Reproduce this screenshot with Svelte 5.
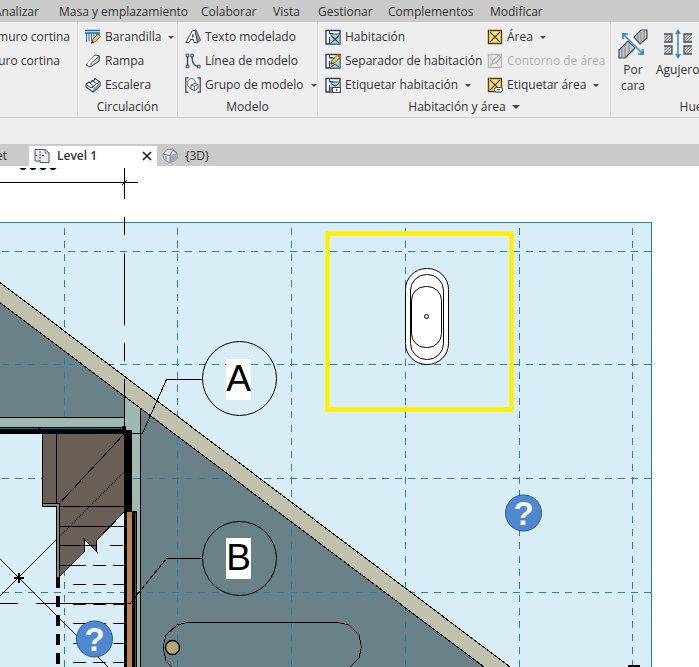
<script lang="ts">
	type Shape = { d: string; fill?: string; stroke?: string; w?: number };
	type Tool = { label: string; icon?: string; arrow?: boolean; disabled?: boolean };
	type Panel = { title: string; name: string; tools: Tool[] };

	const menus = [
		'Analizar',
		'Masa y emplazamiento',
		'Colaborar',
		'Vista',
		'Gestionar',
		'Complementos',
		'Modificar'
	];

	const panels: Panel[] = [
		{ title: '', name: 'curtain', tools: [{ label: 'muro cortina' }, { label: 'muro cortina' }] },
		{
			title: 'Circulación',
			name: 'circulation',
			tools: [
				{ label: 'Barandilla', icon: 'railing', arrow: true },
				{ label: 'Rampa', icon: 'ramp' },
				{ label: 'Escalera', icon: 'stair' }
			]
		},
		{
			title: 'Modelo',
			name: 'model',
			tools: [
				{ label: 'Texto modelado', icon: 'text' },
				{ label: 'Línea de modelo', icon: 'line' },
				{ label: 'Grupo de modelo', icon: 'group', arrow: true }
			]
		},
		{
			title: 'Habitación y área',
			name: 'rooms',
			tools: [
				{ label: 'Habitación', icon: 'room' },
				{ label: 'Separador de habitación', icon: 'separator' },
				{ label: 'Etiquetar habitación', icon: 'roomTag', arrow: true },
				{ label: 'Área', icon: 'area', arrow: true },
				{ label: 'Contorno de área', icon: 'boundary', disabled: true },
				{ label: 'Etiquetar área', icon: 'areaTag', arrow: true }
			]
		}
	];

	const ink = '#34404d';
	const pencil: Shape[] = [
		{ d: 'M6 11 7 7.5 13 1.5 15.5 4 9.5 10Z', fill: '#f5c451', stroke: '#6b4a1c', w: 0.8 },
		{ d: 'M12 2.5 13.2 1.2 15.7 3.7 14.5 5Z', fill: '#d9622b' },
		{ d: 'M5.5 11.5 6.5 8.7 8.3 10.5Z', fill: '#3b3027' }
	];
	const roomBase: Shape[] = [
		{ d: 'M1 1.5H15V15H1Z', fill: '#f5f8fa', stroke: ink, w: 1.4 },
		{ d: 'M5.5 5.5H14.5V14.5H5.5Z', fill: '#a9d3e6' },
		{ d: 'M4.5 1V4.5H8M4.5 8V15M4.5 5H15', stroke: ink, w: 1.2 }
	];
	const areaBase: Shape[] = [
		{ d: 'M1.5 1.5H14.5V14.5H1.5Z', fill: '#ffe07a', stroke: '#4a4325', w: 1.4 },
		{ d: 'M3 3 13 13M13 3 3 13', stroke: '#4a4325', w: 1.2 }
	];

	const icons: Record<string, Shape[]> = {
		railing: [
			{ d: 'M0 1.5H15M0 4H15', stroke: '#1d67ae', w: 1.4 },
			{ d: 'M1.5 4V13M4 4V12M6.5 4V12M9 4V11M11.5 4V8M14 4V6', stroke: '#2e78bd', w: 1.1 },
			{ d: 'M6.5 14 8 10 13 5 15.5 7.5 10.5 12.5Z', fill: '#f5bd45', stroke: '#694b20', w: 0.9 },
			{ d: 'M6 14.5 7.2 11.7 9 13.5Z', fill: '#3b3027' }
		],
		ramp: [
			{ d: 'M1 12 10 2 14.5 3 14 8 5 14Z', fill: '#fff', stroke: ink, w: 1 },
			{ d: 'M6 13.5V10L14.5 3 14 8Z', fill: '#c9cdd1', stroke: ink, w: 0.8 },
			{ d: 'M1 12 6 10 10 2Z', fill: '#fff' }
		],
		stair: [
			{ d: 'M1 7 4 5 5.5 6 7 3.5 8.5 4.5 10 1.5 15 5V9L8 15 1 10Z', fill: '#f8f9fa', stroke: ink, w: 1.1 },
			{ d: 'M1.5 7.5 6 11 8.5 9 4.5 5.5M7 11 9 9 11.5 6.5 7 3.5M12 7 14.5 5', stroke: ink, w: 1 },
			{ d: 'M8 12 14.5 6V9L8 14.5Z', fill: '#8f98a0' }
		],
		text: [
			{ d: 'M8 1.5 11 1 15.5 11 12.5 14 10 13.5Z', fill: '#8d9aa5', stroke: ink, w: 0.8 },
			{
				d: 'M.8 13.5 7.5 1.5H10L12.5 13.5H9L8.5 10.5H5.5L4 13.5ZM7 8H8.2L7.9 5.5Z',
				fill: '#fff',
				stroke: ink,
				w: 1
			}
		],
		line: [
			{ d: 'M2.5 3V13M7 3C7 9 9 13 13 13.5', stroke: ink, w: 1.3 },
			{
				d: 'M1.2 1.2H3.8V3.8H1.2ZM1.2 12.2H3.8V14.8H1.2ZM5.8 1.2H8.2V3.8H5.8ZM12.5 12.2H15V14.8H12.5Z',
				fill: '#fff',
				stroke: ink,
				w: 1
			}
		],
		group: [
			{ d: 'M3.5 .8H.8V15.2H3.5M12.5 .8H15.2V15.2H12.5', stroke: ink, w: 1.2 },
			{ d: 'M3 6.5A3.7 3.7 0 1 1 10 6.5 3.7 3.7 0 1 1 3 6.5', fill: '#fff', stroke: '#536170', w: 1 },
			{ d: 'M6 8 10 6.5 13 7.5V11.5L9.5 13.5 6 12Z', fill: '#edf1f4', stroke: '#536170', w: 1 },
			{ d: 'M6 8 9.5 9.2 13 7.5M9.5 9.2V13.5', stroke: '#536170', w: 0.8 }
		],
		room: [...roomBase, { d: 'M6 6.5 14 14M14 6.5 6 14', stroke: ink, w: 1.1 }],
		separator: [...roomBase, { d: 'M6 14 10 11 14 14', stroke: ink, w: 1 }, ...pencil],
		roomTag: [
			...roomBase,
			{ d: 'M6 6.5 10 9 14 6.5M6 14V10', stroke: ink, w: 1 },
			{ d: 'M7.5 10.5H15.5V15.5H7.5Z', fill: '#fff', stroke: ink, w: 1 },
			{ d: 'M11.5 12V14', stroke: ink, w: 1 }
		],
		area: areaBase,
		boundary: [
			{ d: 'M1.5 1.5H14.5V14.5H1.5Z', fill: '#ededed', stroke: '#b8b8b8', w: 1.3 },
			{ d: 'M2 5H7M3 13 7 9M9 10 13 14M4 2V14', stroke: '#c2c2c2', w: 1 },
			{ d: 'M5 11 6 7.5 11.5 2 14 4.5 8.5 10Z', fill: '#e6e6e6', stroke: '#adadad', w: 1.1 }
		],
		areaTag: [
			...areaBase,
			{
				d: 'M9.5 10.5H13.5A2.2 2.2 0 0 1 13.5 15H9.5A2.2 2.2 0 0 1 9.5 10.5Z',
				fill: '#fff',
				stroke: ink,
				w: 1
			},
			{ d: 'M10 12.7H13', stroke: ink, w: 1 }
		]
	};

	// structural grid of the floor plan
	const gridX = [64.5, 177.5, 291.5, 405.5, 519.5, 632.5];
	const gridY = [251.5, 364.5, 478.5, 592.5];
	const hiddenTreads = [565.5, 584.5, 604.5, 623.5, 643.5, 662.5];
	const bubbles = [
		{ name: 'A', y: 378.5, boxY: 359, leader: 'M131 433.5H142.5L166.5 379.5H202' },
		{ name: 'B', y: 558.5, boxY: 538, leader: 'M0 603.5H18M36 603.5H130L166.5 558.5H202' }
	];
	const helpMarks = [
		{ x: 523.5, y: 513 },
		{ x: 94.5, y: 639 }
	];
</script>

{#snippet icon(name: string)}
	<svg class="icon" viewBox="0 0 16 16" aria-hidden="true">
		{#each icons[name] as s}
			<path d={s.d} fill={s.fill ?? 'none'} stroke={s.stroke ?? 'none'} stroke-width={s.w ?? 0} />
		{/each}
	</svg>
{/snippet}

<div class="app">
	<nav class="menu-bar">
		{#each menus as menu}
			<button type="button">{menu}</button>
		{/each}
	</nav>

	<div class="ribbon">
		{#each panels as panel}
			<section class="panel {panel.name}">
				<div class="tools">
					{#each panel.tools as tool}
						<button type="button" class="tool" disabled={tool.disabled}>
							{#if tool.icon}{@render icon(tool.icon)}{/if}
							<span>{tool.label}</span>
							{#if tool.arrow}<i class="arrow"></i>{/if}
						</button>
					{/each}
				</div>
				{#if panel.title}
					<div class="panel-title">
						{panel.title}
						{#if panel.name === 'rooms'}<i class="arrow large"></i>{/if}
					</div>
				{/if}
			</section>
		{/each}

		<section class="panel openings">
			<div class="big-tools">
				<button type="button" class="big-tool">
					<svg viewBox="0 0 30 30" aria-hidden="true">
						<path d="M1 21 9 13 17 21 9 29H1Z" fill="#bfc3c7" />
						<path d="M11 12 19 4 27 11 18 20Z" fill="#fff" />
						<path d="M17 8 24 1H29V10L22 15Z" fill="#bfc3c7" />
						<path d="M1 29V21L10 12 17 19 7 29ZM16 8 23 1H29V9L22 15Z" fill="none" stroke="#454b51" stroke-width="1.2" />
						<path d="M4 19V28M7 16V28M11 14V24M20 5V12M23 3V14M26 2V11" stroke="#858a90" />
						<path d="M6 6 24 24M5 10V5H10M25 20V25H20" fill="none" stroke="#388de0" stroke-width="1.7" />
						<path d="M4 4H9L4 9ZM26 26H21L26 21Z" fill="#388de0" />
					</svg>
					<span>Por<br />cara</span>
				</button>
				<button type="button" class="big-tool">
					<svg viewBox="0 0 30 30" aria-hidden="true">
						<path d="M9 5H21V13H9ZM9 17H21V25H9Z" fill="#fff" />
						<path d="M1 5H9V13H1ZM21 5H29V13H21ZM1 17H9V25H1ZM21 17H29V25H21Z" fill="#c1c4c7" />
						<path d="M2 12 8 6M2 9 5 6M5 12 9 8M22 12 28 6M22 9 25 6M25 12 29 8M2 24 8 18M2 21 5 18M5 24 9 20M22 24 28 18M22 21 25 18M25 24 29 20" stroke="#888c90" />
						<path d="M1 5H9V13H1M29 5H21V13H29M1 17H9V25H1M29 17H21V25H29" fill="none" stroke="#4a4e52" stroke-width="1.3" />
						<path d="M15 3V27" stroke="#388de0" stroke-width="1.6" />
						<path d="M15 0 18 5H12ZM15 30 12 25H18Z" fill="#388de0" />
					</svg>
					<span>Agujero</span>
				</button>
			</div>
			<div class="panel-title">Hueco</div>
		</section>
	</div>

	<div class="options-bar"></div>

	<div class="view-tabs">
		<button type="button" class="view-tab previous">et</button>
		<div class="view-tab active">
			<svg class="icon" viewBox="0 0 16 16" aria-hidden="true">
				<path d="M1 1.5H11L15 5V14.5H6V13H1Z" fill="#e8ebee" stroke="#4c5966" />
				<path d="M6 3V13M1 7.5H4M8 7.5H11M11 1.5V5H15" fill="none" stroke="#4c5966" stroke-dasharray="2 1" />
			</svg>
			<span>Level 1</span>
			<button type="button" class="close" aria-label="Cerrar">
				<svg viewBox="0 0 10 10"><path d="M1 1 9 9M9 1 1 9" stroke="#222" stroke-width="1.7" /></svg>
			</button>
		</div>
		<button type="button" class="view-tab">
			<svg class="icon" viewBox="0 0 16 16" aria-hidden="true">
				<path d="M1 6 5 1.5 11 1 15 5V11L8 15 2 11.5Z" fill="#dfe2e5" stroke="#858d95" />
				<path d="M8 7 15 5V11L8 15Z" fill="#a2abb4" />
				<path d="M1 6 8 7.5 11 2 15 5.5M8 7.5V15M4 8V12" fill="none" stroke="#77818b" />
			</svg>
			<span>{'{3D}'}</span>
		</button>
	</div>

	<svg class="plan" viewBox="0 166 699 501" role="img" aria-label="Level 1">
		<!-- dimension string above the plan -->
		<text class="dimension" x="18" y="170">0000</text>
		<path d="M0 166H140V168H0Z" fill="#fff" />
		<g class="crisp">
			<path class="thin" d="M0 182.5H138M122 185 127 180" />

			<path d="M0 222H652V667H0Z" fill="#d8edf5" />
			<path d="M0 222.5H651.5V667" fill="none" stroke="#1888b2" />

			<!-- terrain and roof edge -->
			<path d="M0 302.5 124.5 396V418H0ZM141 409 484 667H141Z" fill="#6b8188" />
			<path d="M124 396 141 409V667H132V434H124Z" fill="#a0b9b0" />
			<g class="grid">
				{#each gridX as x}
					<path d="M{x} 228V667" />
				{/each}
				{#each gridY as y}
					<path d="M2 {y}H651" />
				{/each}
			</g>
			<path d="M0 282.5 510 667H484L0 302.5Z" fill="#c0c2ae" />
			<path class="thin" d="M0 282.5 510 667M0 302.5 484 667M140.5 409V667" />

			<!-- top wall -->
			<path d="M0 418H124V427H0Z" fill="#a0b9b0" />
			<path class="thin" d="M0 417.5H124" />
			<path d="M0 427H122V426H126V434H0Z" fill="#000" />
			<path d="M0 428.5H38M41 428.5H122" stroke="#176f9b" />

			<!-- stair flight -->
			<path d="M42 434H124V512L96 541 97 552 84 539 85 551 59 577V504H42Z" fill="#695f57" />
			<path class="thin" d="M42.5 434V504M56.5 434V504M124 434 59 504M124 472 0 596M0 559 108 667" />
			<path class="thin" d="M60 506.5H124M60 526.5H124M60 545.5H97M60 565.5H73" />
			<path class="thin" d="M124 512 96 541 97 552 84 539 85 551 59 577" />
			<path d="M42.5 503.5H59.5V577L56.5 580V506.5H42.5Z" fill="#8a8781" stroke="#000" />
			<path class="treads" d="M110 545.5H124" />
			{#each hiddenTreads as y}
				<path class="treads" d="M73 {y}H124" />
			{/each}
			<path d="M58 577V667" stroke="#000" stroke-width="4" stroke-dasharray="11 8" />
			<path d="M14 577.5H24M19 573V583" stroke="#000" stroke-width="2" />

			<!-- right wall and door leaf -->
			<path d="M124 430H132V511H137V667H124Z" fill="#000" />
			<path d="M127 512H132V667H127Z" fill="#b98150" />
			<path d="M135 513V667" stroke="#6b4a32" />

			<path class="thin" d="M124.5 168V199M124.5 217V235M124.5 253V325M124.5 343V361M124.5 379V434" />

			<!-- bath inside the roof -->
			<path class="thin" d="M172 667 166 661 163 647 166 635 177 625 187 622.5H338L349 625 359 635 361.5 647 359 658 350 667" />
			<path d="M628 665H640V667H628Z" fill="#000" />
		</g>
		<circle cx="172.5" cy="647.5" r="7" fill="#b6a678" stroke="#000" stroke-width="1.4" />

		{#each bubbles as b}
			<path class="thin crisp" d={b.leader} />
			<circle class="thin" cx="239.5" cy={b.y} r="37" />
			<rect x="226" y={b.boxY} width="25" height="41" fill="#fff" />
			<text class="bubble-name" x="238.5" y={b.boxY + 32}>{b.name}</text>
		{/each}

		<!-- freestanding bath with selection frame -->
		<g class="bath">
			<rect x="405.5" y="268.5" width="43" height="96" rx="21" />
			<rect x="410.5" y="274.5" width="33" height="85" rx="16" />
			<rect x="411.5" y="286.5" width="30" height="61" rx="14" />
			<circle cx="426.5" cy="316.5" r="2" />
		</g>
		<rect x="327.5" y="233.5" width="184" height="176" fill="none" stroke="#ffef00" stroke-width="4.5" />

		{#each helpMarks as mark}
			<circle cx={mark.x} cy={mark.y} r="18" fill="#4f88cf" stroke="#2c5994" />
			<text class="help-mark" x={mark.x} y={mark.y + 12}>?</text>
		{/each}
	</svg>
</div>

<style>
	:global(body) {
		margin: 0;
		background: #fff;
	}

	.app {
		overflow: hidden;
		font-family: 'Open Sans', 'Noto Sans', sans-serif;
		font-size: 12px;
		line-height: 16px;
		color: #333;
	}

	button {
		padding: 0;
		border: 0;
		background: none;
		color: inherit;
		font: inherit;
		text-align: left;
		white-space: nowrap;
	}

	/* Menu */
	.menu-bar {
		display: grid;
		grid-template-columns: 65px 142px 72px 45px 70px 102px auto;
		box-sizing: border-box;
		height: 22px;
		margin-left: -6px;
		padding-top: 2px;
		background: #cacaca;
	}

	/* Ribbon */
	.ribbon {
		display: flex;
		height: 95px;
		border-bottom: 1px solid #cdcdcd;
		background: #eee;
	}

	.panel {
		display: flex;
		flex: none;
		flex-direction: column;
		box-sizing: border-box;
		padding: 3px 0 0 7px;
		border-right: 1px solid #d6d6d6;
	}

	.curtain {
		width: 78px;
	}

	.curtain .tool {
		justify-content: flex-end;
		padding-right: 7px;
	}

	.curtain .tool + .tool {
		padding-right: 17px;
	}

	.circulation {
		width: 100px;
	}

	.model {
		width: 140px;
	}

	.rooms {
		width: 293px;
	}

	.openings {
		width: 174px;
	}

	.tools {
		display: grid;
		grid-template-rows: repeat(3, 24px);
		grid-auto-flow: column;
		grid-auto-columns: auto;
	}

	.rooms .tools {
		grid-template-columns: 162px auto;
	}

	.tool {
		display: flex;
		align-items: center;
		gap: 4px;
		min-width: 0;
	}

	.tool:disabled {
		color: #b1b1b1;
	}

	.icon {
		flex: none;
		width: 16px;
		height: 16px;
	}

	.arrow {
		flex: none;
		margin-left: 3px;
		border: 3px solid transparent;
		border-top-color: #444;
		border-bottom: 0;
	}

	.arrow.large {
		border-width: 4px;
		border-bottom: 0;
	}

	.panel-title {
		display: flex;
		align-items: center;
		justify-content: center;
		gap: 3px;
		margin-left: -7px;
		padding-top: 2px;
	}

	.big-tools {
		display: flex;
		gap: 8px;
		height: 72px;
	}

	.big-tool {
		display: flex;
		flex-direction: column;
		align-items: center;
		gap: 3px;
		padding-top: 4px;
		text-align: center;
	}

	.big-tool svg {
		width: 30px;
		height: 30px;
	}

	.options-bar {
		height: 26px;
		background: #eee;
	}

	/* View tabs */
	.view-tabs {
		display: flex;
		align-items: flex-end;
		height: 22px;
		background: #cacaca;
	}

	.view-tab {
		display: flex;
		align-items: center;
		box-sizing: border-box;
		gap: 7px;
		height: 20px;
		padding-left: 5px;
	}

	.view-tab.previous {
		justify-content: flex-end;
		width: 29px;
		padding-right: 22px;
	}

	.view-tab.active {
		width: 128px;
		padding-right: 5px;
		background: #fff;
		font-weight: 600;
	}

	.close {
		width: 10px;
		height: 10px;
		margin-left: auto;
	}

	.close svg {
		display: block;
	}

	/* Plan */
	.plan {
		display: block;
		width: 100%;
	}

	.crisp {
		shape-rendering: crispEdges;
	}

	.thin {
		fill: none;
		stroke: #000;
		stroke-width: 1;
	}

	.grid path {
		stroke: #1888b2;
		stroke-dasharray: 7 6.1;
	}

	.treads {
		stroke: #000;
		stroke-width: 1.5;
		stroke-dasharray: 13 7;
	}

	.bath * {
		fill: #fff;
		stroke: #000;
		stroke-width: 1;
	}

	.dimension {
		font: bold 18px 'Liberation Sans', sans-serif;
	}

	.bubble-name {
		font: 37px 'Liberation Sans', sans-serif;
		text-anchor: middle;
	}

	.help-mark {
		font: bold 33px 'Liberation Sans', sans-serif;
		fill: #f4f7fb;
		text-anchor: middle;
	}
</style>
